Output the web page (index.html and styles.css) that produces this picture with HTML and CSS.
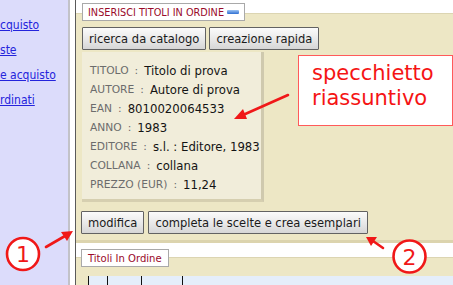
FILE: index.html
```html
<!DOCTYPE html>
<html lang="it">
<head>
<meta charset="utf-8">
<title>Inserisci titoli in ordine</title>
<link rel="stylesheet" href="styles.css">
</head>
<body>
<div class="page">
  <nav class="sidebar">
    <a href="#">cquisto</a>
    <a href="#">ste</a>
    <a href="#">e acquisto</a>
    <a href="#">rdinati</a>
  </nav>
  <div class="gutter"></div>
  <main class="main">
    <section class="panel panel-insert">
      <div class="legend">INSERISCI TITOLI IN ORDINE<span class="collapse"></span></div>
      <div class="btn-row">
        <button class="btn">ricerca da catalogo</button>
        <button class="btn">creazione rapida</button>
      </div>
      <div class="summary">
        <div class="row"><span class="lbl">TITOLO</span><span class="sep">:</span><span class="val">Titolo di prova</span></div>
        <div class="row"><span class="lbl">AUTORE</span><span class="sep">:</span><span class="val">Autore di prova</span></div>
        <div class="row"><span class="lbl">EAN</span><span class="sep">:</span><span class="val">8010020064533</span></div>
        <div class="row"><span class="lbl">ANNO</span><span class="sep">:</span><span class="val">1983</span></div>
        <div class="row"><span class="lbl">EDITORE</span><span class="sep">:</span><span class="val">s.l. : Editore, 1983</span></div>
        <div class="row"><span class="lbl">COLLANA</span><span class="sep">:</span><span class="val">collana</span></div>
        <div class="row"><span class="lbl">PREZZO (EUR)</span><span class="sep">:</span><span class="val">11,24</span></div>
      </div>
      <div class="btn-row btn-row-bottom">
        <button class="btn">modifica</button>
        <button class="btn">completa le scelte e crea esemplari</button>
      </div>
    </section>
    <section class="panel panel-list">
      <div class="legend legend-list">Titoli In Ordine</div>
      <div class="grid">
        <span class="cell"></span><span class="cell"></span><span class="cell"></span><span class="cell cell-last"></span>
      </div>
    </section>
  </main>

  <div class="note">specchietto<br>riassuntivo</div>
  <svg class="overlay" width="453" height="285" viewBox="0 0 453 285">
    <g stroke="#f01818" stroke-width="2.6" fill="none" stroke-linecap="round">
      <line x1="288" y1="95" x2="243" y2="115"/>
      <line x1="46" y1="247" x2="65" y2="236"/>
      <line x1="383" y1="248" x2="373" y2="241"/>
    </g>
    <g fill="#f01818">
      <polygon points="234,119 243,109 247,119"/>
      <polygon points="73,231 61,232 67,241"/>
      <polygon points="366,237 377,237 371,246"/>
    </g>
    <circle cx="23" cy="254" r="16" fill="#fff" stroke="#f01818" stroke-width="2.6"/>
    <circle cx="409.5" cy="256.5" r="16" fill="#fff" stroke="#f01818" stroke-width="2.6"/>
    <text x="23" y="262" class="num">1</text>
    <text x="409.5" y="264.5" class="num">2</text>
  </svg>
</div>
</body>
</html>
```

FILE: styles.css
```css
* { box-sizing: border-box; }
html, body { margin: 0; padding: 0; background: #fff; }
body { font-family: "DejaVu Sans Condensed", "DejaVu Sans", sans-serif; }

.page {
  position: relative;
  width: 453px;
  height: 285px;
  overflow: hidden;
  display: flex;
}

.sidebar {
  width: 70px;
  flex: none;
  background: #dcdcfb;
  border-right: 2px solid #c2c2c8;
  padding-top: 13px;
  display: flex;
  flex-direction: column;
}
.sidebar a {
  display: block;
  height: 25px;
  line-height: 25px;
  font-size: 12px;
  color: #2424dc;
  text-decoration: underline;
  white-space: nowrap;
}

.gutter { width: 5px; flex: none; background: #fff; }

.main {
  flex: 1;
  border-left: 1px solid #5a5a5a;
  background: #fff;
  display: flex;
  flex-direction: column;
}

.panel {
  background: #ede7c5;
  padding-left: 6px;
  display: flex;
  flex-direction: column;
  align-items: flex-start;
}
.panel-insert {
  margin-top: 13px;
  border-top: 1px solid #dcd5b2;
  border-bottom: 3px solid #dcd4ae;
  padding-bottom: 6px;
}
.panel-list {
  margin-top: 14px;
  border-top: 1px solid #dcd5b2;
  flex: 1;
  padding-left: 5px;
}

.legend {
  margin-top: -11px;
  height: 18px;
  background: #fff;
  border: 1px solid #a9a9a9;
  padding: 0 5px 0 5px;
  display: flex;
  align-items: center;
  gap: 3px;
  font-size: 10.8px;
  color: #9a0a2a;
  white-space: pre;
}
.legend-list {
  margin-top: -9px;
  font-size: 11.2px;
  padding: 0 6px;
}
.collapse {
  width: 12px;
  height: 4px;
  border-radius: 1px;
  background: linear-gradient(#9cc4f4, #2f6fd2);
}

.btn-row {
  margin-top: 6px;
  display: flex;
  gap: 3px;
}
.btn-row-bottom { margin-top: 9px; margin-left: -1px; gap: 4px; }
.btn {
  height: 23px;
  padding: 0 6px;
  font: inherit;
  font-size: 12.8px;
  color: #1a1a1a;
  background: linear-gradient(#fbfbfb, #e6e6e6 60%, #d6d6d6);
  border: 1px solid #626262;
  border-radius: 1px;
}

.summary {
  margin-top: 2px;
  width: 182px;
  background: #f1edda;
  border-right: 3px solid #cfc9ae;
  border-bottom: 3px solid #d6cfb0;
  padding: 9px 8px 5px 8px;
}
.row {
  height: 19px;
  display: flex;
  align-items: center;
  white-space: nowrap;
}
.lbl { font-family: "DejaVu Sans", sans-serif; font-size: 10.7px; color: #6c6c6c; }
.sep { font-family: "DejaVu Sans", sans-serif; font-size: 10.7px; color: #6c6c6c; margin: 0 6px 0 6px; }
.val { font-size: 13px; color: #141414; }

.grid {
  margin-top: 9px;
  margin-left: 7px;
  align-self: stretch;
  height: 20px;
  display: grid;
  grid-template-columns: 19px 34px 41px 1fr;
  background: #e5eefa;
  border-left: 1px solid #111;
}
.cell { border-right: 1px solid #111; }
.cell-last { border-right: none; }

.note {
  position: absolute;
  left: 298px;
  top: 55px;
  width: 155px;
  height: 71px;
  background: #fff;
  border: 1.5px solid #ff5a5a;
  padding: 5px 0 0 13px;
  font-family: "DejaVu Sans", sans-serif;
  font-size: 21px;
  line-height: 25px;
  color: #f51414;
}

.overlay {
  position: absolute;
  left: 0;
  top: 0;
  pointer-events: none;
}
.num {
  font-family: "DejaVu Sans", sans-serif;
  font-size: 22px;
  fill: #f01818;
  text-anchor: middle;
}
```
